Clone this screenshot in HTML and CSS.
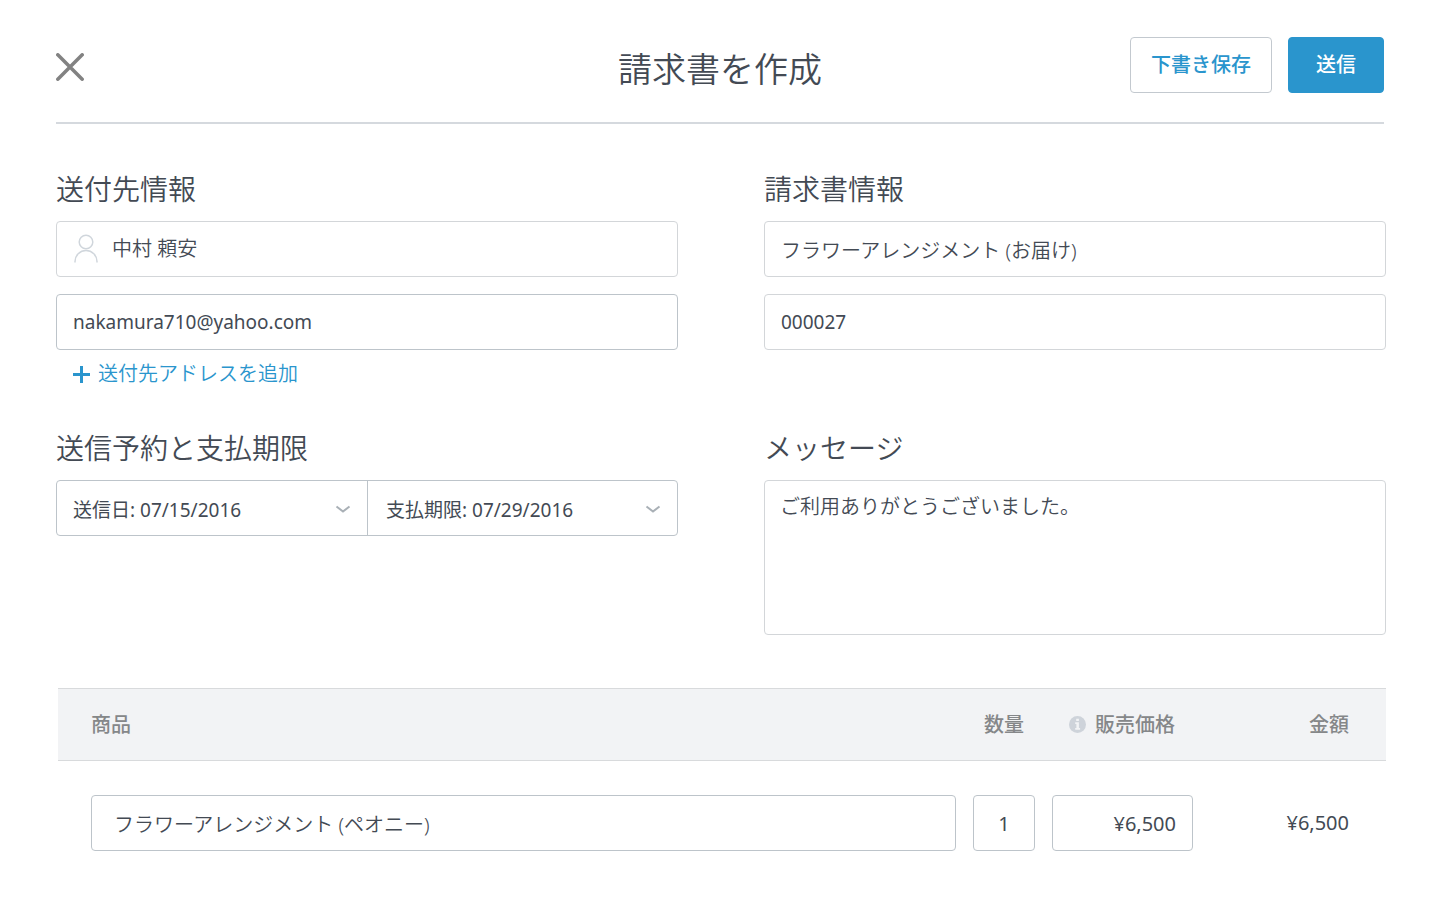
FILE: index.html
```html
<!DOCTYPE html>
<html lang="ja">
<head>
    <meta charset="UTF-8">
    <meta name="viewport" content="width=device-width, initial-scale=1.0">
    <title>請求書を作成</title>
    <link rel="stylesheet" href="styles.css">
</head>
<body>
<form class="invoice">
    <header class="header">
        <button type="button" class="close" aria-label="閉じる">
            <svg width="28" height="28" viewBox="0 0 28 28"><path d="M1.8 1.8l24.4 24.4M26.2 1.8L1.8 26.2"/></svg>
        </button>
        <h1>請求書を作成</h1>
        <div class="actions">
            <button type="button" class="btn">下書き保存</button>
            <button type="submit" class="btn btn-primary">送信</button>
        </div>
    </header>

    <div class="sections">
        <section>
            <h2>送付先情報</h2>
            <div class="fields">
                <label class="field field-light">
                    <svg class="person" width="24" height="30" viewBox="0 0 24 30"><circle cx="12" cy="8" r="6.8"/><path d="M1 28.5v-1a11 11 0 0 1 22 0v1"/></svg>
                    <input type="text" value="中村 頼安" aria-label="氏名">
                </label>
                <input class="field latin" type="email" value="nakamura710@yahoo.com" aria-label="メールアドレス">
            </div>
            <button type="button" class="add">
                <svg width="17" height="17" viewBox="0 0 17 17"><path d="M8.5 0v17M0 8.5h17"/></svg>
                送付先アドレスを追加
            </button>
        </section>

        <section>
            <h2>請求書情報</h2>
            <div class="fields">
                <input class="field field-light" type="text" value="フラワーアレンジメント (お届け)" aria-label="タイトル">
                <input class="field field-light latin" type="text" value="000027" aria-label="請求書番号">
            </div>
        </section>

        <section>
            <h2>送信予約と支払期限</h2>
            <div class="dates">
                <div class="date">
                    <select class="latin" aria-label="送信日"><option>送信日: 07/15/2016</option></select>
                    <svg width="16" height="9" viewBox="0 0 16 9"><path d="M1.5 1.5L8 6.5l6.500-5"/></svg>
                </div>
                <div class="date">
                    <select class="latin" aria-label="支払期限"><option>支払期限: 07/29/2016</option></select>
                    <svg width="16" height="9" viewBox="0 0 16 9"><path d="M1.5 1.5L8 6.5l6.500-5"/></svg>
                </div>
            </div>
        </section>

        <section>
            <h2><label for="message">メッセージ</label></h2>
            <textarea id="message" class="field field-light">ご利用ありがとうございました。</textarea>
        </section>
    </div>

    <table class="items">
        <thead>
            <tr>
                <th class="product">商品</th>
                <th class="qty">数量</th>
                <th class="price">
                    <svg class="info" width="17" height="17" viewBox="0 0 17 17"><circle cx="8.500" cy="8.500" r="8.500"/><path d="M7.200 2.800h2.700v2.300H7.200zM6.200 6.300h3.700v5.800h1.200v1.700H6.200v-1.700h1.200V8H6.200z"/></svg>
                    販売価格
                </th>
                <th class="amount">金額</th>
            </tr>
        </thead>
        <tbody>
            <tr>
                <td class="product"><input class="field" type="text" value="フラワーアレンジメント (ペオニー)" aria-label="商品"></td>
                <td class="qty"><input class="field" type="text" value="1" aria-label="数量"></td>
                <td class="price"><input class="field" type="text" value="¥6,500" aria-label="販売価格"></td>
                <td class="amount">¥6,500</td>
            </tr>
        </tbody>
    </table>
</form>
</body>
</html>
```

FILE: styles.css
```css
* {
    box-sizing: border-box;
}
body {
    margin: 0;
    background: #fff;
    color: #434a54;
}
body, button, input, select, textarea {
    font-family: "Noto Sans", "Noto Sans CJK JP", sans-serif;
    font-size: 20px;
    font-weight: 350;
    line-height: 28px;
}
input, select, textarea {
    color: #434a54;
}
.latin {
    font-size: 19px;
    font-weight: 400;
}
svg {
    fill: none;
    flex: none;
}
h1, h2 {
    margin: 0;
    font-weight: 350;
}
h1 {
    font-size: 34px;
    line-height: 48px;
}
h2 {
    margin-bottom: 12px;
    font-size: 28px;
    line-height: 40px;
}
.invoice {
    padding: 37px 54px 48px 56px;
}

/* Header */
.header {
    display: grid;
    grid-template-columns: 1fr auto 1fr;
    align-items: center;
    margin-right: 2px;
    padding-bottom: 29px;
    border-bottom: 2px solid #d5d9de;
}
.header h1 {
    padding-top: 8px;
}
.close {
    justify-self: start;
    display: flex;
    padding: 4px 0 0;
    border: none;
    background: none;
    cursor: pointer;
}
.close svg {
    stroke: #828282;
    stroke-width: 3.5;
    stroke-linecap: round;
}
.actions {
    display: flex;
    justify-content: flex-end;
    gap: 16px;
}
.btn {
    height: 56px;
    padding: 0 20px;
    border: 1px solid #c3c9cf;
    border-radius: 4px;
    background: #fff;
    color: #2a95cd;
    font-weight: 500;
    cursor: pointer;
}
.btn-primary {
    padding: 0 27px;
    border-color: #2a95cd;
    background: #2a95cd;
    color: #fff;
}

/* Form sections */
.sections {
    display: grid;
    grid-template-columns: 1fr 1fr;
    gap: 42px 86px;
    padding-top: 45px;
}
.fields {
    display: flex;
    flex-direction: column;
    gap: 17px;
}
.field {
    display: flex;
    align-items: center;
    width: 100%;
    height: 56px;
    padding: 0 16px;
    border: 1px solid #bdc4ca;
    border-radius: 4px;
    background: #fff;
}
.field-light {
    border-color: #d3d6d9;
}
.field input {
    flex: 1;
    min-width: 0;
    padding: 0;
    border: none;
    background: none;
}
.person {
    margin: 0 14px 0 1px;
    stroke: #d0d6dc;
    stroke-width: 1.5;
}
textarea.field {
    display: block;
    height: 155px;
    padding: 12px 15px;
    resize: none;
}
.add {
    display: flex;
    align-items: center;
    gap: 8px;
    margin: 12px 0 0 17px;
    padding: 0;
    border: none;
    background: none;
    color: #2a95cd;
    line-height: 24px;
    cursor: pointer;
}
.add svg {
    stroke: #2a95cd;
    stroke-width: 3;
}
.dates {
    display: grid;
    grid-template-columns: 1fr 1fr;
    border: 1px solid #bdc4ca;
    border-radius: 4px;
}
.date {
    position: relative;
}
.date + .date {
    border-left: 1px solid #bdc4ca;
}
.date select {
    width: 100%;
    height: 54px;
    padding: 4px 40px 0 16px;
    border: none;
    background: none;
    appearance: none;
}
.date + .date select {
    padding-left: 18px;
}
.date svg {
    position: absolute;
    top: 24px;
    right: 16px;
    stroke: #a9b0b6;
    stroke-width: 2;
    pointer-events: none;
}

/* Items table */
.items {
    width: calc(100% - 2px);
    margin: 53px 0 0 2px;
    border-collapse: separate;
    border-spacing: 0;
    table-layout: fixed;
}
.items th {
    height: 73px;
    padding: 0;
    border: solid #d8dadc;
    border-width: 1px 0;
    background: #f2f3f5;
    color: #858789;
    font-weight: 500;
    text-align: right;
}
.items td {
    padding: 34px 0 0;
}
.items .product {
    padding-left: 33px;
    text-align: left;
}
.items .qty {
    width: 79px;
    padding-left: 17px;
    text-align: center;
}
.items .price {
    width: 158px;
    padding-left: 17px;
}
.items th.price {
    padding-right: 18px;
}
.items .amount {
    width: 193px;
    padding-right: 37px;
    text-align: right;
}
.items td.amount, .qty .field, .price .field {
    font-weight: 400;
}
.product .field {
    padding: 0 22px;
}
.qty .field {
    text-align: center;
}
.price .field {
    text-align: right;
}
.info {
    margin-right: 4px;
    vertical-align: -1px;
}
.info circle {
    fill: #ced3da;
}
.info path {
    fill: #f2f3f5;
}
```
